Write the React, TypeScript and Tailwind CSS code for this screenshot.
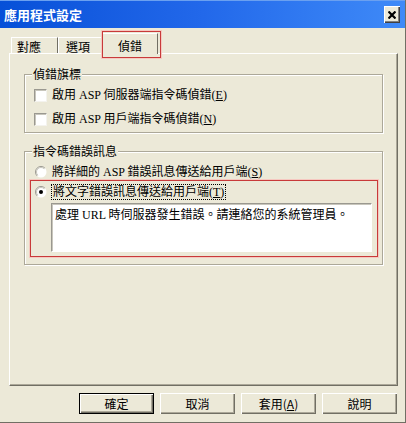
import React from "react";

function Checkbox() {
  return (
    <div className="w-[13px] h-[13px] shrink-0 bg-white border border-t-[#9a9890] border-l-[#9a9890] border-r-[#f4f3ee] border-b-[#f4f3ee] shadow-[inset_1px_1px_0_#c8c6bc]" />
  );
}

function Radio({ checked }: { checked?: boolean }) {
  return (
    <svg width="12" height="12" viewBox="0 0 12 12" className="shrink-0">
      <circle cx="6" cy="6" r="5.5" fill="#fff" />
      <path d="M2.1 9.9 A5.5 5.5 0 0 1 9.9 2.1" stroke="#9a9890" strokeWidth="1" fill="none" />
      <path d="M2.8 9.2 A4.5 4.5 0 0 1 9.2 2.8" stroke="#c8c6bc" strokeWidth="1" fill="none" />
      {checked && <circle cx="6" cy="6" r="2" fill="#000" />}
    </svg>
  );
}

function Btn({ children, def }: { children: React.ReactNode; def?: boolean }) {
  return (
    <div
      className={
        "w-[75px] h-[21px] flex items-center justify-center bg-[#ECE9D8] " +
        (def
          ? "border border-black shadow-[inset_1px_1px_0_#fff,inset_-1px_-1px_0_#716f64,inset_-2px_-2px_0_#aca899]"
          : "shadow-[inset_1px_1px_0_#fff,inset_-1px_-1px_0_#716f64,inset_-2px_-2px_0_#aca899]")
      }
    >
      {children}
    </div>
  );
}

export default function App() {
  return (
    <div className="w-[406px] h-[423px] bg-[#ECE9D8] flex flex-col overflow-hidden font-['Liberation_Serif','Noto_Sans_CJK_TC',serif] text-[12px] leading-[14px] text-black border-r border-b border-[#716f64]">
      {/* title bar */}
      <div className="h-[28px] shrink-0 flex items-center justify-between pl-[4px] pr-[5px] bg-linear-to-r from-[#0650d8] via-[#2268ea] to-[#3f8af8] border-t border-[#6aa0f0]">
        <span className="text-white font-bold text-[13px] leading-[16px] font-['Noto_Sans_CJK_TC',sans-serif]">
          應用程式設定
        </span>
        <div className="w-[16px] h-[17px] flex items-center justify-center bg-[#ECE9D8] shadow-[inset_1px_1px_0_#fff,inset_-1px_-1px_0_#404040,inset_-2px_-2px_0_#808080]">
          <svg width="8" height="8" viewBox="0 0 8 8">
            <path d="M0.5 0.5 L7.5 7.5 M7.5 0.5 L0.5 7.5" stroke="#000" strokeWidth="2.2" />
          </svg>
        </div>
      </div>

      {/* tabs */}
      <div className="mt-[5px] h-[21px] -mb-[1px] pl-[11px] flex items-start relative z-10 font-['Noto_Sans_CJK_TC',sans-serif]">
        <div className="mt-[4px] h-[16px] w-[47px] pl-[5px] pt-[2px] border-t border-l border-r border-t-white border-l-white border-r-[#716f64]">
          對應
        </div>
        <div className="mt-[4px] h-[16px] w-[44px] pl-[7px] pt-[2px] border-t border-l border-t-white border-l-white">
          選項
        </div>
        <div className="relative h-[21px] w-[56px] flex justify-center pt-[5px] bg-[#ECE9D8] border-t border-l border-r border-t-white border-l-white border-r-[#716f64]">
          偵錯
          <div className="absolute left-[-1px] -top-[3px] -right-[4px] -bottom-[4px] border border-[#c83a3a] shadow-[0_0_0_1px_#f6c8c0]" />
        </div>
      </div>

      {/* panel */}
      <div className="ml-[9px] w-[389px] h-[333px] shrink-0 border border-t-white border-l-white border-r-[#716f64] border-b-[#716f64] shadow-[inset_-1px_-1px_0_#aca899] pt-[13px] px-[14px]">
        <fieldset className="border border-[#aca899] shadow-[inset_1px_1px_0_#fff,1px_1px_0_#fff] m-0 p-0">
          <legend className="ml-[7px] px-[1px] bg-[#ECE9D8] leading-[14px] font-['Noto_Sans_CJK_TC',sans-serif]">偵錯旗標</legend>
          <div className="pt-[7px] pb-[6px] pl-[9px] flex flex-col gap-[10px]">
            <div className="h-[14px] flex items-center gap-[5px]">
              <Checkbox />
              <span>
                啟用 ASP 伺服器端指令碼偵錯(<u>E</u>)
              </span>
            </div>
            <div className="h-[14px] flex items-center gap-[5px]">
              <Checkbox />
              <span>
                啟用 ASP 用戶端指令碼偵錯(<u>N</u>)
              </span>
            </div>
          </div>
        </fieldset>

        <fieldset className="mt-[11px] border border-[#aca899] shadow-[inset_1px_1px_0_#fff,1px_1px_0_#fff] m-0 p-0">
          <legend className="ml-[7px] px-[1px] bg-[#ECE9D8] leading-[14px] font-['Noto_Sans_CJK_TC',sans-serif]">指令碼錯誤訊息</legend>
          <div className="pt-[7px] pb-[7px]">
            <div className="h-[14px] pl-[10px] flex items-center gap-[5px]">
              <Radio />
              <span>
                將詳細的 ASP 錯誤訊息傳送給用戶端(<u>S</u>)
              </span>
            </div>
            <div className="mt-[1px] ml-[5px] mr-[4px] border border-[#c83a3a] shadow-[0_0_0_1px_#f6c8c0] pt-[4px] pb-[4px]">
              <div className="h-[14px] pl-[4px] flex items-center gap-[5px]">
                <Radio checked />
                <span className="outline outline-dotted outline-1 outline-black px-[1px]">
                  將文字錯誤訊息傳送給用戶端(<u>T</u>)
                </span>
              </div>
              <div className="mt-[4px] ml-[20px] w-[321px] h-[49px] bg-white border border-t-[#9a9890] border-l-[#9a9890] border-r-white border-b-white shadow-[inset_1px_1px_0_#c8c6bc] pl-[3px] pt-[4px]">
                處理 URL 時伺服器發生錯誤。請連絡您的系統管理員。
              </div>
            </div>
          </div>
        </fieldset>
      </div>

      {/* buttons */}
      <div className="mt-[7px] pr-[8px] flex justify-end gap-[6px] font-['Noto_Sans_CJK_TC',sans-serif]">
        <Btn def>確定</Btn>
        <Btn>取消</Btn>
        <Btn>
          <span>
            套用(<u>A</u>)
          </span>
        </Btn>
        <Btn>說明</Btn>
      </div>
    </div>
  );
}
